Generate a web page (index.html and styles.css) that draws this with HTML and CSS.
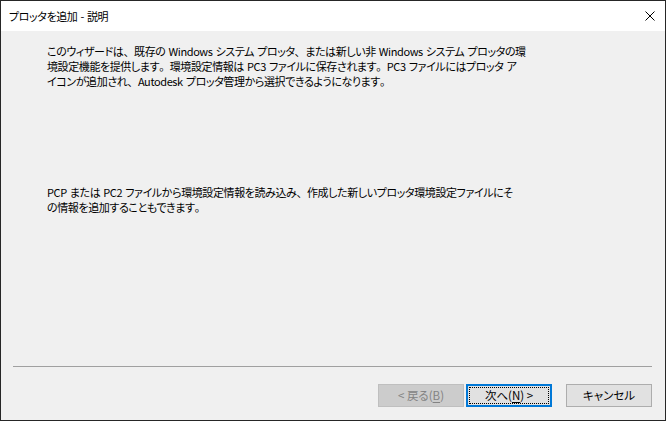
FILE: index.html
```html
<!DOCTYPE html>
<html lang="ja">
<head>
<meta charset="utf-8">
<title>プロッタを追加 - 説明</title>
<link rel="stylesheet" href="styles.css">
</head>
<body>
<div class="window">
  <div class="titlebar">
    <span class="title">プロッタを追加 - 説明</span>
    <svg class="close" width="10" height="10" viewBox="0 0 10 10"><path d="M0.5 0.5 L9.5 9.5 M9.5 0.5 L0.5 9.5" stroke="#000" stroke-width="1" fill="none"/></svg>
  </div>
  <div class="main">
    <p class="para p1">このウィザードは<span class="pn">、</span>既存の Windows システム プロッタ<span class="pn">、</span>または新しい非 Windows システム プロッタの環<br>境設定機能を提供します<span class="pn">。</span>環境設定情報は PC3 ファイルに保存されます<span class="pn">。</span>PC3 ファイルにはプロッタ ア<br>イコンが追加され<span class="pn">、</span>Autodesk プロッタ管理から選択できるようになります<span class="pn">。</span></p>
    <p class="para p2">PCP または PC2 ファイルから環境設定情報を読み込み<span class="pn">、</span>作成した新しいプロッタ環境設定ファイルにそ<br>の情報を追加することもできます<span class="pn">。</span></p>
  </div>
  <div class="footer">
    <div class="separator"></div>
    <div class="buttons">
      <div class="btn disabled">&lt; 戻る(<u>B</u>)</div>
      <div class="btn default"><span class="focus">次へ(<u>N</u>) &gt;</span></div>
      <div class="btn cancel">キャンセル</div>
    </div>
  </div>
</div>
</body>
</html>
```
FILE: styles.css
```css
html, body {
  margin: 0;
  padding: 0;
  background: #f0f0f0;
}
body {
  font-family: "Noto Sans CJK JP", "Noto Sans", sans-serif;
  font-size: 11px;
  color: #000;
  font-feature-settings: "palt";
}
.window {
  width: 666px;
  height: 421px;
  box-sizing: border-box;
  border: 1px solid #262626;
  display: flex;
  flex-direction: column;
  background: #f0f0f0;
}
.titlebar {
  height: 30px;
  flex: none;
  background: #fff;
  display: flex;
  align-items: center;
  justify-content: space-between;
  padding-left: 8px;
  padding-right: 10px;
}
.title {
  font-size: 11px;
  line-height: 15px;
  letter-spacing: -0.4px;
  word-spacing: 1px;
}
.close {
  display: block;
}
.main {
  flex: 1;
  padding: 13px 0 0 46px;
}
.para {
  margin: 0;
  line-height: 15px;
  white-space: nowrap;
  font-size: 11px;
  letter-spacing: -0.4px;
  word-spacing: 1px;
}
.pn {
  font-feature-settings: normal;
}
.p2 {
  margin-top: 96px;
}
.footer {
  flex: none;
  height: 54px;
  box-sizing: border-box;
}
.separator {
  height: 1px;
  background: #a0a0a0;
  margin: 0 13px 0 12px;
}
.buttons {
  display: flex;
  justify-content: flex-end;
  padding: 17px 13px 0 0;
}
.btn {
  width: 86px;
  height: 23px;
  box-sizing: border-box;
  border: 1px solid #adadad;
  background: #e1e1e1;
  display: flex;
  align-items: center;
  justify-content: center;
  font-size: 11.5px;
  line-height: 15px;
}
.btn.disabled {
  background: #cccccc;
  border-color: #bfbfbf;
  color: #838383;
  margin-right: 2px;
}
.btn.default {
  border: 2px solid #0078d7;
  padding: 1px;
  margin-right: 14px;
}
.btn.default .focus {
  flex: 1;
  align-self: stretch;
  border: 1px dotted #000;
  display: flex;
  align-items: center;
  justify-content: center;
}
u {
  text-decoration-thickness: 1px;
  text-underline-offset: 2px;
}
```
